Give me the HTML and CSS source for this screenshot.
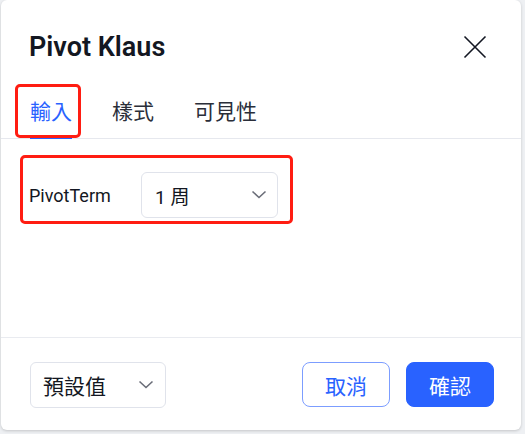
FILE: index.html
```html
<!DOCTYPE html>
<html lang="zh-Hant">
<head>
<meta charset="utf-8">
<title>Pivot Klaus</title>
<link rel="stylesheet" href="styles.css">
</head>
<body>
<div class="dialog">
  <div class="header">
    <h1 class="title">Pivot Klaus</h1>
    <button class="close" aria-label="close">
      <svg width="24" height="24" viewBox="0 0 24 24"><path d="M1.5 1.5 L22.5 22.5 M22.5 1.5 L1.5 22.5" stroke="#131722" stroke-width="1.6" fill="none"/></svg>
    </button>
  </div>
  <div class="tabs">
    <div class="tab active">輸入</div>
    <div class="tab">樣式</div>
    <div class="tab">可見性</div>
  </div>
  <div class="content">
    <div class="row">
      <div class="label">PivotTerm</div>
      <div class="select term">
        <span>1 周</span>
        <svg class="chev" width="16" height="10" viewBox="0 0 16 10"><path d="M1.5 1.5 L8 7.5 L14.5 1.5" stroke="#6a6d78" stroke-width="1.6" fill="none"/></svg>
      </div>
    </div>
  </div>
  <div class="footer">
    <div class="select defaults">
      <span>預設值</span>
      <svg class="chev" width="16" height="10" viewBox="0 0 16 10"><path d="M1.5 1.5 L8 7.5 L14.5 1.5" stroke="#6a6d78" stroke-width="1.6" fill="none"/></svg>
    </div>
    <div class="buttons">
      <button class="btn cancel">取消</button>
      <button class="btn ok">確認</button>
    </div>
  </div>
  <div class="mark mark-tab"></div>
  <div class="mark mark-row"></div>
</div>
</body>
</html>
```
FILE: styles.css
```css
* { box-sizing: border-box; }
html, body { margin: 0; padding: 0; }
body {
  width: 525px;
  height: 434px;
  background: #eef0f3;
  font-family: Roboto, "Noto Sans CJK TC", sans-serif;
  color: #131722;
  overflow: hidden;
}
.dialog {
  position: relative;
  width: 520px;
  height: 430px;
  margin-left: 1px;
  background: #fff;
  border-radius: 6px;
  box-shadow: 0 1px 3px rgba(0,0,0,0.18);
  display: flex;
  flex-direction: column;
}
.header {
  height: 94px;
  display: flex;
  align-items: center;
  justify-content: space-between;
  padding: 0 34px 0 28px;
}
.title {
  margin: 0;
  font-size: 27px;
  font-weight: 600;
  letter-spacing: 0;
  color: #131722;
}
.close {
  border: 0;
  background: none;
  padding: 0;
  width: 24px;
  height: 24px;
  display: flex;
}
.tabs {
  height: 45px;
  display: flex;
  gap: 40px;
  padding-left: 29px;
  box-shadow: inset 0 -1px 0 #e6e8ee;
}
.tab {
  font-family: "Noto Sans CJK TC", sans-serif;
  font-size: 21px;
  line-height: 30px;
  padding-top: 1px;
  height: 45px;
  color: #2a2e39;
  border-bottom: 3px solid transparent;
}
.tab.active {
  color: #2962ff;
  border-bottom-color: #2962ff;
}
.content {
  flex: 1;
  padding: 33px 29px 0 28px;
  border-bottom: 1px solid #e9ebf0;
}
.row {
  display: flex;
  align-items: center;
}
.label {
  width: 112px;
  font-size: 18px;
  color: #131722;
}
.select {
  height: 46px;
  border: 1px solid #e0e3eb;
  border-radius: 6px;
  display: flex;
  align-items: center;
  justify-content: space-between;
  font-family: Roboto, "Noto Sans CJK TC", sans-serif;
  color: #131722;
}
.term {
  width: 137px;
  padding: 0 10px 0 13px;
  font-size: 19px;
}
.defaults {
  width: 136px;
  padding: 0 11px 0 12px;
  font-size: 21px;
}
.footer {
  height: 92px;
  padding: 24px 27px 23px 29px;
  display: flex;
  justify-content: space-between;
}
.buttons {
  display: flex;
  gap: 16px;
}
.btn {
  width: 88px;
  height: 45px;
  border-radius: 8px;
  font-family: "Noto Sans CJK TC", sans-serif;
  font-size: 21px;
  padding: 0;
}
.cancel {
  background: #fff;
  border: 1px solid #7c9dff;
  color: #2962ff;
}
.ok {
  background: #2962ff;
  border: 1px solid #2962ff;
  color: #fff;
}
.mark {
  position: absolute;
  border: 3px solid #ff1d12;
  border-radius: 5px;
}
.mark-tab {
  left: 14px;
  top: 84px;
  width: 66px;
  height: 54px;
}
.mark-row {
  left: 19px;
  top: 155px;
  width: 273px;
  height: 69px;
}
```
